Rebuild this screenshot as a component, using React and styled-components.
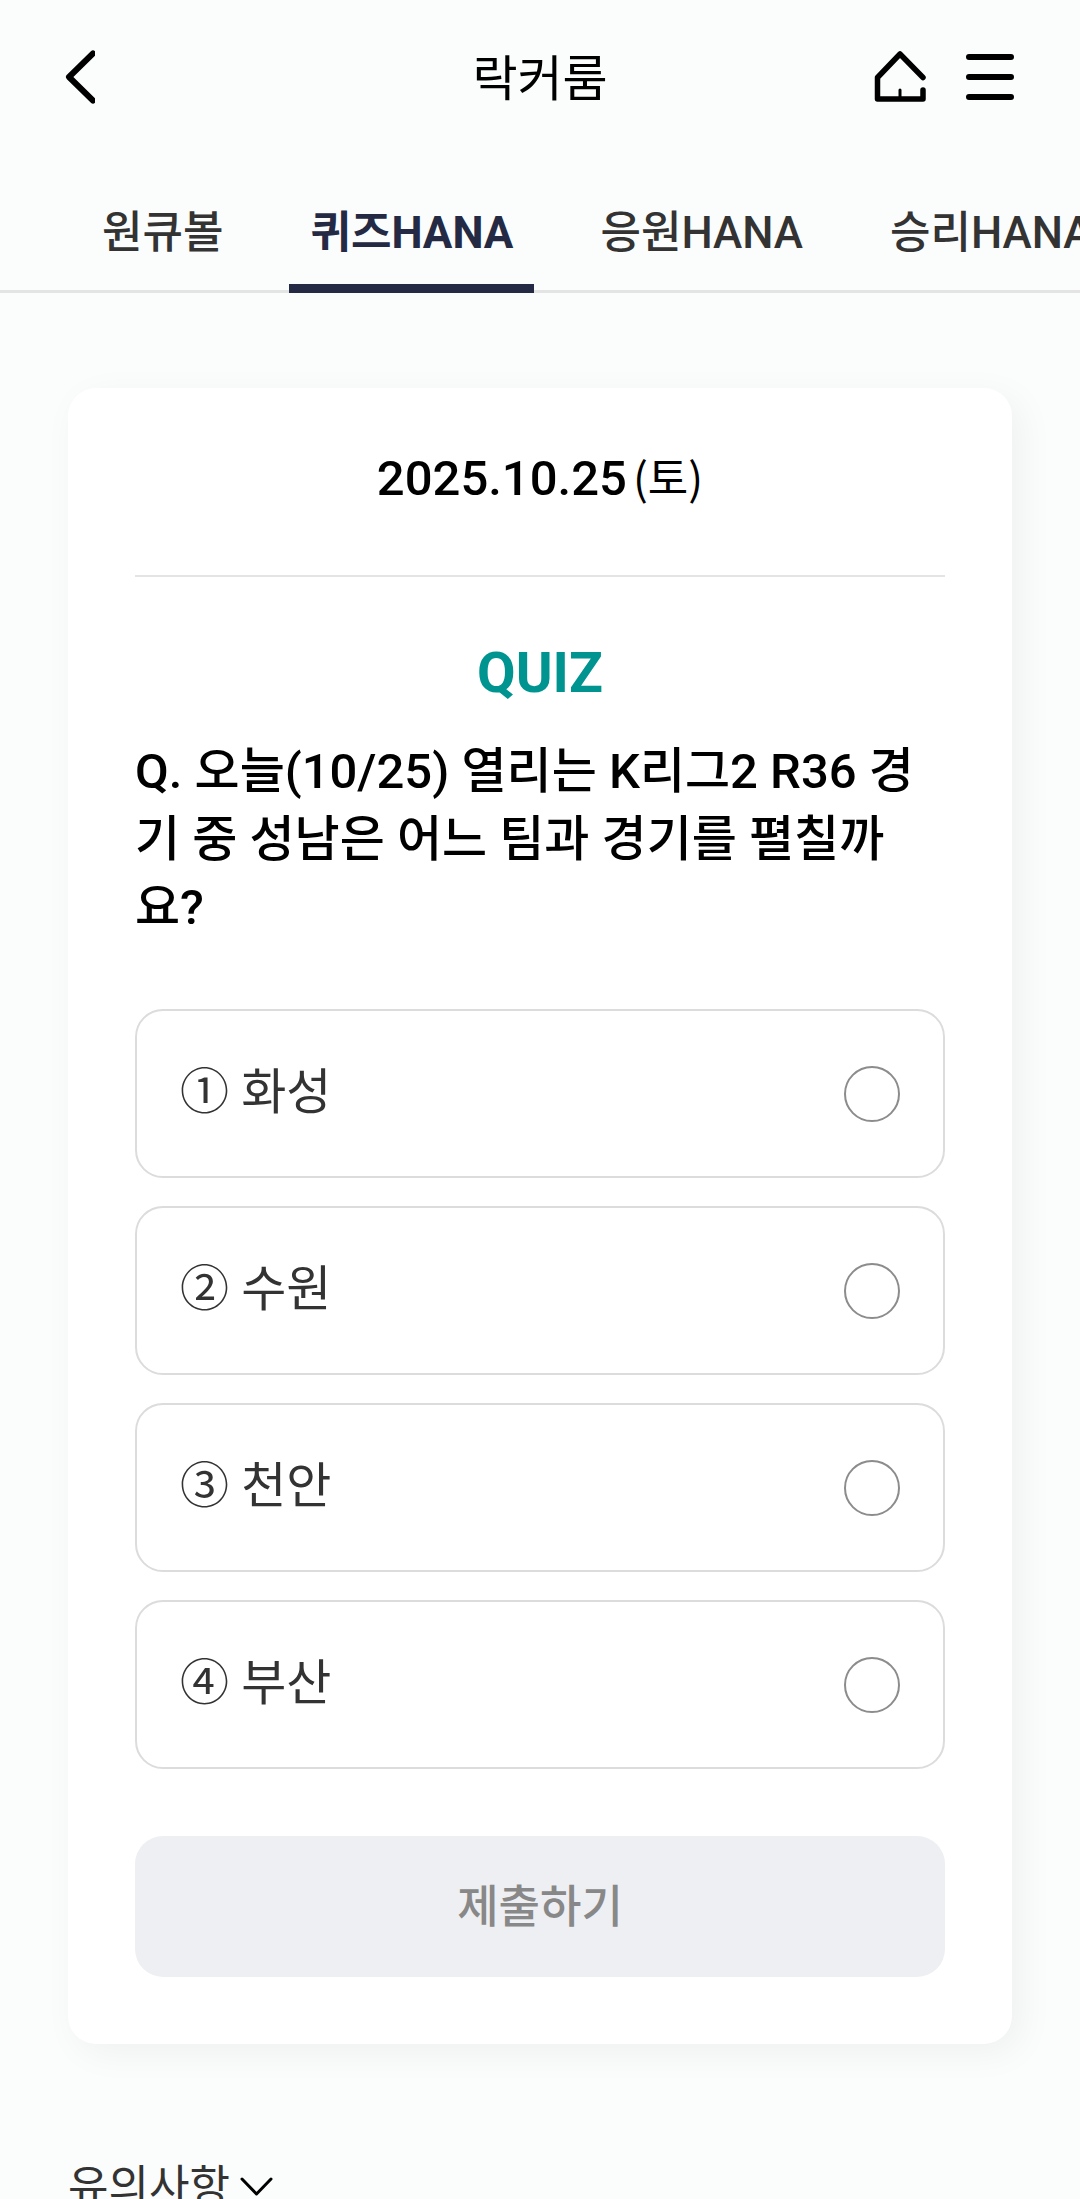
import React, { useState } from 'react';
import styled, { createGlobalStyle } from 'styled-components';

const GlobalStyle = createGlobalStyle`
  * {
    box-sizing: border-box;
  }

  body {
    margin: 0;
    background-color: #fbfdfc;
    color: #000;
    font-family: Roboto, "Noto Sans CJK KR", sans-serif;
  }

  button, input {
    margin: 0;
    font-family: inherit;
  }
`;

const Page = styled.div`
  height: 100vh;
  overflow: hidden auto;
  scrollbar-width: none;
`;

const Header = styled.header`
  display: grid;
  grid-template-columns: 1fr auto 1fr;
  align-items: center;
  height: 154px;
  padding: 0 65px;
`;

const Title = styled.h1`
  margin: 0;
  padding-top: 6px;
  font-size: 49px;
  font-weight: 400;
  line-height: 68px;
`;

const HeaderActions = styled.div`
  display: flex;
  justify-content: flex-end;
  gap: 38px;
`;

const IconButton = styled.button`
  display: flex;
  justify-self: start;
  padding: 0;
  border: 0;
  background: none;
  color: #000;
`;

const Tabs = styled.nav`
  display: flex;
  gap: 45px;
  padding: 0 81px;
  overflow: hidden;
  box-shadow: inset 0 -3px #e4e4e4;
`;

const Tab = styled.a`
  flex: none;
  padding: 46px 21px 18px;
  border-bottom: 9px solid ${(props) => (props.$active ? '#252a44' : 'transparent')};
  color: ${(props) => (props.$active ? '#252a44' : '#333')};
  font-size: 44px;
  font-weight: ${(props) => (props.$active ? 700 : 500)};
  line-height: 66px;
  text-decoration: none;
  white-space: nowrap;
`;

const Card = styled.form`
  margin: 95px 68px 0;
  padding: 0 67px 67px;
  border-radius: 28px;
  background-color: #fff;
  box-shadow: 9px 9px 36px rgba(0, 0, 0, 0.05);
`;

const DateLine = styled.p`
  margin: 0;
  padding: 54px 0 62px;
  border-bottom: 2px solid #e4e4e4;
  font-size: 49px;
  font-weight: 500;
  line-height: 68px;
  text-align: center;
`;

const Weekday = styled.span`
  margin-left: 6px;
  font-family: "Noto Sans CJK KR", sans-serif;
  font-size: 44px;
  font-weight: 400;
`;

const QuizTitle = styled.h2`
  margin: 62px 0 31px;
  color: #009490;
  font-size: 56px;
  font-weight: 700;
  line-height: 68px;
  text-align: center;
`;

const Question = styled.p`
  margin: 0 0 67px;
  font-size: 49px;
  font-weight: 500;
  line-height: 68px;
  word-break: break-all;
`;

const Options = styled.div`
  display: grid;
  gap: 28px;
`;

const Option = styled.label`
  display: flex;
  align-items: center;
  height: 169px;
  padding: 0 43px;
  border: 2px solid #dcdcdc;
  border-radius: 28px;
  color: #333;
  font-size: 49px;
  line-height: 68px;
`;

const OptionText = styled.span`
  flex: 1;
  padding-bottom: 2px;
`;

const Radio = styled.input`
  appearance: none;
  width: 56px;
  height: 56px;
  border: 2px solid #8c8c8c;
  border-radius: 50%;

  &:checked {
    border: 16px solid #009490;
  }
`;

const Submit = styled.button`
  width: 100%;
  height: 141px;
  margin-top: 67px;
  padding: 0 0 6px;
  border: 0;
  border-radius: 28px;
  background-color: #eeeff3;
  color: #888;
  font-size: 45px;
  font-weight: 500;
`;

const Notice = styled.button`
  display: flex;
  align-items: center;
  gap: 10px;
  margin: 110px 68px 0;
  padding: 0;
  border: 0;
  background: none;
  color: #333;
  font-size: 44px;
  line-height: 66px;
`;

const tabs = ['원큐볼', '퀴즈HANA', '응원HANA', '승리HANA'];
const options = ['① 화성', '② 수원', '③ 천안', '④ 부산'];

const BackIcon = () => (
  <svg width="30" height="56" viewBox="0 0 30 56" fill="none" stroke="currentColor" strokeWidth="6">
    <path d="M28 4.500 4 28 28 51.500" strokeLinecap="round" strokeLinejoin="round" />
  </svg>
);

const HomeIcon = () => (
  <svg width="54" height="56" viewBox="0 0 54 56" fill="none" stroke="currentColor" strokeWidth="5.5" strokeLinecap="round" strokeLinejoin="round">
    <path d="M50 28.500 27 5 4.500 28.500V50H50V41" />
    <path d="M27 41V49" strokeWidth="3" />
  </svg>
);

const MenuIcon = () => (
  <svg width="50" height="56" viewBox="0 0 50 56" fill="none" stroke="currentColor" strokeWidth="6" strokeLinecap="round">
    <path d="M4 8H46M4 28H46M4 48H46" />
  </svg>
);

const ChevronIcon = () => (
  <svg width="33" height="20" viewBox="0 0 33 20" fill="none" stroke="#000" strokeWidth="3">
    <path d="M2 2 16.500 17 31 2" strokeLinecap="round" strokeLinejoin="round" />
  </svg>
);

const App = () => {
  const [answer, setAnswer] = useState('');

  return (
    <Page>
      <GlobalStyle />
      <Header>
        <IconButton type="button" aria-label="뒤로"><BackIcon /></IconButton>
        <Title>락커룸</Title>
        <HeaderActions>
          <IconButton type="button" aria-label="홈"><HomeIcon /></IconButton>
          <IconButton type="button" aria-label="메뉴"><MenuIcon /></IconButton>
        </HeaderActions>
      </Header>

      <Tabs>
        {tabs.map((tab) => (
          <Tab key={tab} href="#" $active={tab === '퀴즈HANA'}>{tab}</Tab>
        ))}
      </Tabs>

      <Card onSubmit={(e) => e.preventDefault()}>
        <DateLine>2025.10.25<Weekday>(토)</Weekday></DateLine>
        <QuizTitle>QUIZ</QuizTitle>
        <Question>Q. 오늘(10/25) 열리는 K리그2 R36 경기 중 성남은 어느 팀과 경기를 펼칠까요?</Question>
        <Options>
          {options.map((option) => (
            <Option key={option}>
              <OptionText>{option}</OptionText>
              <Radio
                type="radio"
                name="answer"
                checked={answer === option}
                onChange={() => setAnswer(option)}
              />
            </Option>
          ))}
        </Options>
        <Submit type="submit" disabled={!answer}>제출하기</Submit>
      </Card>

      <Notice type="button">
        유의사항
        <ChevronIcon />
      </Notice>
    </Page>
  );
};

export default App;
